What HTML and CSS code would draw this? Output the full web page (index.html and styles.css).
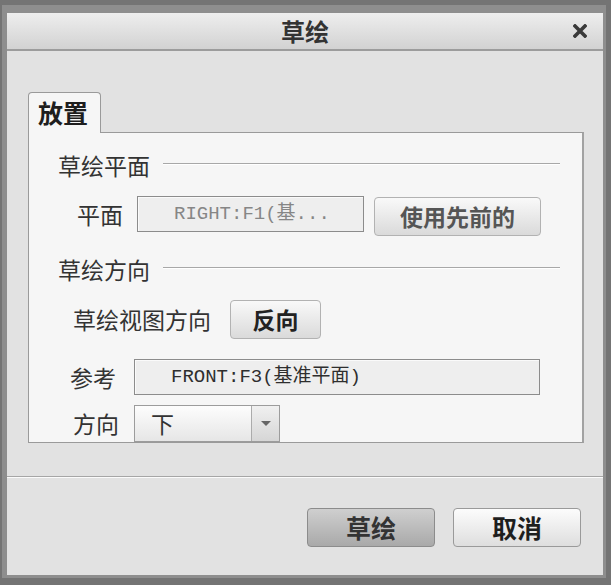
FILE: index.html
```html
<!DOCTYPE html>
<html lang="zh-CN">

<head>
  <meta charset="UTF-8">
  <meta name="viewport" content="width=device-width, initial-scale=1.0">
  <title>草绘</title>
  <link rel="stylesheet" href="styles.css">
</head>

<body>
  <div class="window">
    <!-- 标题栏 -->
    <div class="titlebar">
      <span class="title">草绘</span>
      <svg class="close" width="14" height="14" viewBox="0 0 14 14">
        <path d="M2 2L12 12M12 2L2 12" stroke="#3a3a3a" stroke-width="3.6" stroke-linecap="square" />
      </svg>
    </div>

    <div class="content">
      <div class="tab">放置</div>
      <div class="panel">
        <div class="head">草绘平面</div>
        <div class="row row-plane">
          <span class="label">平面</span>
          <div class="field field-plane">RIGHT:F1(基...</div>
          <div class="btn btn-prev">使用先前的</div>
        </div>

        <div class="head head-dir">草绘方向</div>
        <div class="row row-view">
          <span class="label">草绘视图方向</span>
          <div class="btn btn-flip">反向</div>
        </div>
        <div class="row row-ref">
          <span class="label">参考</span>
          <div class="field field-ref">FRONT:F3(基准平面)</div>
        </div>
        <div class="row row-orient">
          <span class="label">方向</span>
          <div class="select">
            <span class="select-value">下</span>
            <span class="select-arrow"></span>
          </div>
        </div>
      </div>
    </div>

    <div class="footer">
      <div class="btn btn-ok">草绘</div>
      <div class="btn btn-cancel">取消</div>
    </div>
  </div>
</body>

</html>
```

FILE: styles.css
```css
html,body{
  margin: 0;
  padding: 0;
}
body{
  background: #747474;
  font-family: "Noto Sans CJK SC", sans-serif;
  color: #333;
}
.window{
  margin: 5px 5px 7px 2px;
  height: 573px;
  box-sizing: border-box;
  padding: 8px 3px 3px 5px;
  background: #8e8e8e;
  display: flex;
  flex-direction: column;
}
/* 标题栏 */
.titlebar{
  position: relative;
  flex: none;
  height: 36px;
  border-bottom: 2px solid #9c9c9c;
  background: linear-gradient(#eeeeee, #d2d2d2);
  display: flex;
  align-items: center;
  justify-content: center;
}
.title{
  font-size: 24px;
  font-weight: bold;
  line-height: 36px;
  color: #333;
}
.close{
  position: absolute;
  right: 16px;
  top: 11px;
}
/* 主体 */
.content{
  flex: none;
  height: 426px;
  background: #e2e2e2;
  padding: 41px 0 0 21px;
  box-sizing: border-box;
  border-bottom: 1px solid #a6a6a6;
}
.tab{
  position: relative;
  z-index: 1;
  width: 73px;
  height: 41px;
  box-sizing: border-box;
  margin-bottom: -1px;
  border: 1px solid #9a9a9a;
  border-bottom: none;
  border-radius: 4px 4px 0 0;
  background: #f6f6f6;
  padding-left: 9px;
  font-size: 25px;
  font-weight: bold;
  line-height: 38px;
  color: #1e1e1e;
}
.panel{
  width: 556px;
  height: 311px;
  box-sizing: border-box;
  border: 1px solid #9a9a9a;
  border-right: 2px solid #a2a2a2;
  background: #f6f6f6;
  padding: 20px 22px 0 29px;
}
.head{
  display: flex;
  height: 25px;
  font-size: 23px;
  line-height: 25px;
  color: #333;
  white-space: nowrap;
}
.head::after{
  content: "";
  flex: 1;
  align-self: flex-start;
  margin: 10px 0 0 13px;
  border-top: 1px solid #a8a8a8;
  border-bottom: 1px solid #fff;
}
.head-dir{
  margin-top: 21px;
}
.row{
  display: flex;
  align-items: flex-start;
}
.row > *{
  flex: none;
  white-space: nowrap;
}
.label{
  font-size: 23px;
  line-height: 36px;
  color: #333;
}
.row-plane{
  margin-top: 18px;
  padding-left: 19px;
}
.row-view{
  margin-top: 18px;
  padding-left: 15px;
}
.row-view .label{
  line-height: 39px;
}
.row-ref{
  margin-top: 20px;
  padding-left: 12px;
}
.row-orient{
  margin-top: 10px;
  padding-left: 15px;
}
.row-orient .label{
  line-height: 37px;
}
/* 输入框 */
.field{
  height: 36px;
  box-sizing: border-box;
  border: 1px solid #8c8c8c;
  background: #eeeeee;
  box-shadow: inset 1px 1px 0 #fafafa;
  padding-left: 36px;
  font-family: "Liberation Mono", "Noto Sans CJK SC", monospace;
  font-size: 19px;
  line-height: 34px;
  overflow: hidden;
}
.field-plane{
  width: 227px;
  margin-left: 14px;
  color: #868686;
}
.field-ref{
  width: 406px;
  margin-left: 18px;
  color: #2e2e2e;
}
.field .cjk{
  font-size: 21px;
}
/* 按钮 */
.btn{
  height: 39px;
  box-sizing: border-box;
  border: 1px solid #b2b2b2;
  border-radius: 4px;
  background: linear-gradient(#f9f9f9, #dadada);
  text-align: center;
  font-size: 23px;
  font-weight: bold;
  line-height: 37px;
}
.btn-prev{
  width: 167px;
  margin: 1px 0 0 10px;
  color: #555;
}
.btn-flip{
  width: 91px;
  margin-left: 19px;
  color: #222;
}
/* 下拉框 */
.select{
  display: flex;
  width: 146px;
  height: 37px;
  box-sizing: border-box;
  margin-left: 15px;
  border: 1px solid #9c9c9c;
  background: linear-gradient(#fdfdfd, #e6e6e6);
}
.select-value{
  flex: 1;
  padding-left: 16px;
  font-size: 23px;
  line-height: 35px;
  color: #333;
}
.select-arrow{
  position: relative;
  width: 27px;
  border-left: 1px solid #ababab;
  background: linear-gradient(#f0f0f0, #d6d6d6);
}
.select-arrow::after{
  content: "";
  position: absolute;
  left: 9px;
  top: 15px;
  border-left: 5px solid transparent;
  border-right: 5px solid transparent;
  border-top: 5px solid #666;
}
/* 底部按钮 */
.footer{
  flex: 1;
  background: #e2e2e2;
  border-top: 1px solid #fbfbfb;
  display: flex;
  justify-content: flex-end;
  align-items: flex-start;
  gap: 18px;
  padding: 30px 22px 0 0;
}
.btn-ok,.btn-cancel{
  width: 128px;
  font-size: 25px;
}
.btn-ok{
  border-color: #8c8c8c;
  background: linear-gradient(#cfcfcf, #a9a9a9);
  color: #333;
}
.btn-cancel{
  border-color: #9a9a9a;
  background: linear-gradient(#fcfcfc, #dedede);
  color: #1e1e1e;
}
```
